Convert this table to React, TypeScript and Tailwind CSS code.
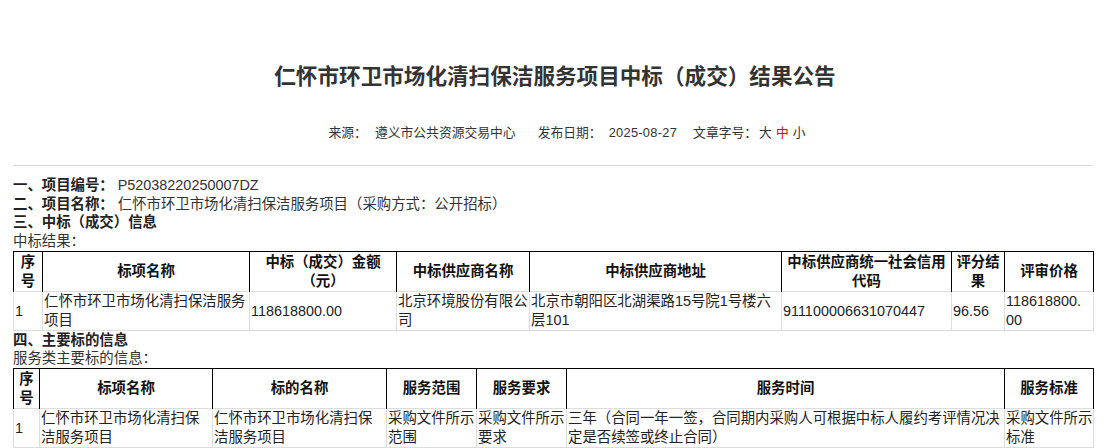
import React from "react";

const font = "font-['Liberation_Sans','Noto_Sans_CJK_SC',sans-serif]";

const th = "border-t border-l border-r border-black border-b-0 font-bold text-center align-middle px-[1px] py-[1px] text-[#111]";
const td = "border border-[#ddd] align-middle pl-[1px] pr-0 py-0 break-all text-[#222]";
const tdn = "border border-[#ddd] align-middle pl-[1px] pr-0 py-0 break-normal text-[#222]";

export default function App() {
  return (
    <div className={`${font} w-[1110px] h-[448px] overflow-hidden bg-white text-[#333]`}>
      <div className="pt-[61px] text-center">
        <h1 className="text-[21.6px] leading-[32px] font-bold text-[#333]">
          仁怀市环卫市场化清扫保洁服务项目中标（成交）结果公告
        </h1>
      </div>
      <div className="mt-[31px] flex justify-center pl-[24px] text-[12.8px] leading-[18px] text-[#333]">
        <span>来源：</span>
        <span className="ml-[8px]">遵义市公共资源交易中心</span>
        <span className="ml-[22px]">发布日期：</span>
        <span className="ml-[7px] tracking-[0.3px]">2025-08-27</span>
        <span className="ml-[16px]">文章字号：</span>
        <span className="ml-[2px]">大</span>
        <span className="ml-[4px] text-[#e00]">中</span>
        <span className="ml-[4px]">小</span>
      </div>
      <div className="mx-[13px] w-[1080px] mt-[23px] border-t border-[#ddd]" />
      <div className="mx-[13px] w-[1080px] mt-[10px] text-[14.4px] leading-[18.7px]">
        <div>
          <span className="font-bold text-[#222]">一、项目编号：</span>
          <span className="ml-[4px]">P52038220250007DZ</span>
        </div>
        <div>
          <span className="font-bold text-[#222]">二、项目名称：</span>
          <span className="ml-[4px]">仁怀市环卫市场化清扫保洁服务项目（采购方式：公开招标）</span>
        </div>
        <div className="font-bold text-[#222]">三、中标（成交）信息</div>
        <div>中标结果：</div>
        <table className="table-fixed border-collapse w-[1080px]">
          <colgroup>
            <col className="w-[29px]" />
            <col className="w-[207px]" />
            <col className="w-[147px]" />
            <col className="w-[133px]" />
            <col className="w-[252px]" />
            <col className="w-[170px]" />
            <col className="w-[53px]" />
            <col className="w-[89px]" />
          </colgroup>
          <thead>
            <tr>
              <th className={th}>序号</th>
              <th className={th}>标项名称</th>
              <th className={th}>中标（成交）金额（元）</th>
              <th className={th}>中标供应商名称</th>
              <th className={th}>中标供应商地址</th>
              <th className={th}>中标供应商统一社会信用代码</th>
              <th className={th}>评分结果</th>
              <th className={th}>评审价格</th>
            </tr>
          </thead>
          <tbody>
            <tr>
              <td className={td}>1</td>
              <td className={td}>仁怀市环卫市场化清扫保洁服务项目</td>
              <td className={td}>118618800.00</td>
              <td className={td}>北京环境股份有限公司</td>
              <td className={td}>北京市朝阳区北湖渠路15号院1号楼六层101</td>
              <td className={td}>911100006631070447</td>
              <td className={td}>96.56</td>
              <td className={tdn}>
                118618800.<wbr />00
              </td>
            </tr>
          </tbody>
        </table>
        <div className="font-bold text-[#222]">四、主要标的信息</div>
        <div>服务类主要标的信息：</div>
        <table className="table-fixed border-collapse w-[1080px]">
          <colgroup>
            <col className="w-[26px]" />
            <col className="w-[173px]" />
            <col className="w-[174px]" />
            <col className="w-[90px]" />
            <col className="w-[90px]" />
            <col className="w-[438px]" />
            <col className="w-[89px]" />
          </colgroup>
          <thead>
            <tr>
              <th className={th}>序号</th>
              <th className={th}>标项名称</th>
              <th className={th}>标的名称</th>
              <th className={th}>服务范围</th>
              <th className={th}>服务要求</th>
              <th className={th}>服务时间</th>
              <th className={th}>服务标准</th>
            </tr>
          </thead>
          <tbody>
            <tr>
              <td className={td}>1</td>
              <td className={td}>仁怀市环卫市场化清扫保洁服务项目</td>
              <td className={td}>仁怀市环卫市场化清扫保洁服务项目</td>
              <td className={td}>采购文件所示范围</td>
              <td className={td}>采购文件所示要求</td>
              <td className={td}>三年（合同一年一签，合同期内采购人可根据中标人履约考评情况决定是否续签或终止合同）</td>
              <td className={td}>采购文件所示标准</td>
            </tr>
          </tbody>
        </table>
      </div>
    </div>
  );
}
